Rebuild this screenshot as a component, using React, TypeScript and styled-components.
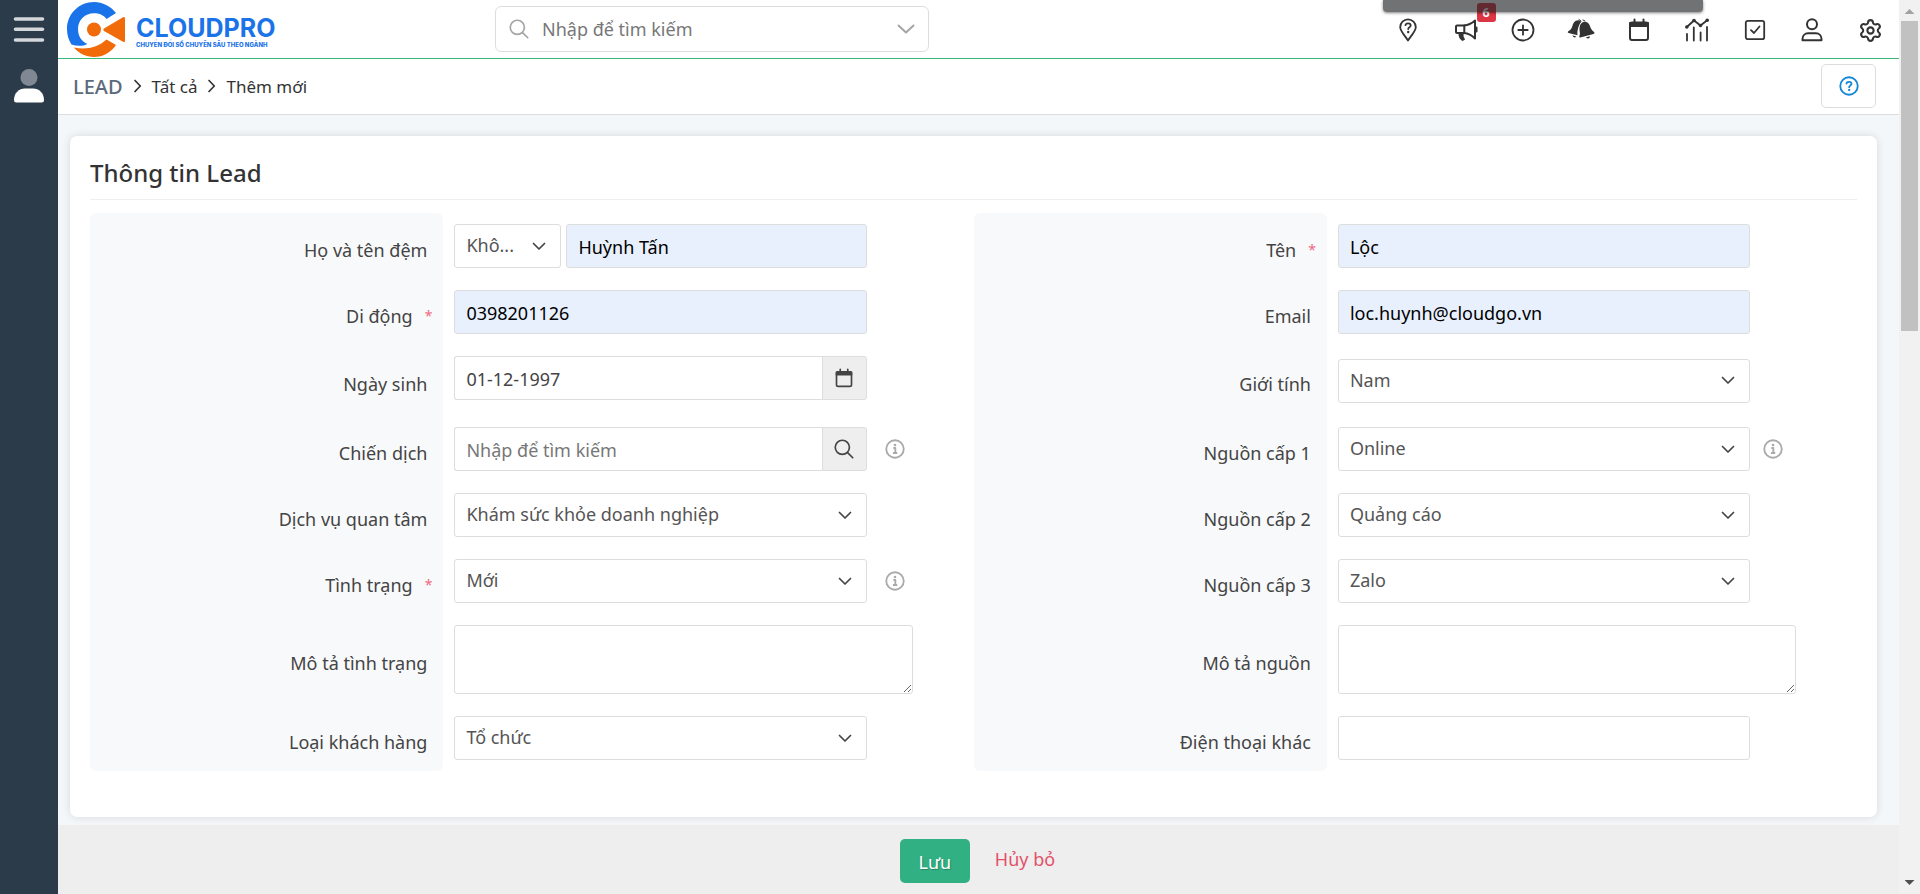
import React from "react";
import styled, { createGlobalStyle } from "styled-components";
import { Settings } from "lucide-react";

const GlobalStyle = createGlobalStyle`
  *, *::before, *::after { box-sizing: border-box; }
  body { margin: 0; background: #f3f7fa; }
  body, input, select, textarea, button {
    font-family: "Noto Sans", "Open Sans", sans-serif;
    font-size: 18px;
    font-weight: 400;
    color: #444;
  }
`;

const Shell = styled.div`
  display: flex;
  min-height: 100vh;
`;

const Sidebar = styled.nav`
  flex: 0 0 58px;
  display: flex;
  flex-direction: column;
  align-items: center;
  gap: 26px;
  padding-top: 16px;
  background: #2c3b49;
`;

const PlainButton = styled.button`
  display: flex;
  align-items: center;
  justify-content: center;
  padding: 0;
  border: 0;
  background: none;
  cursor: pointer;
`;

const Main = styled.div`
  flex: 1;
  min-width: 0;
  display: flex;
  flex-direction: column;
`;

const Header = styled.header`
  display: flex;
  align-items: center;
  justify-content: space-between;
  height: 59px;
  background: #fff;
  border-bottom: 1px solid #3cb878;
`;

const Brand = styled.a`
  flex: 0 0 437px;
  display: flex;
  align-items: center;
  gap: 11px;
  padding-left: 9px;
  text-decoration: none;
  color: #1a73e8;
  font-family: Inter, sans-serif;
`;

const BrandText = styled.span`
  display: flex;
  flex-direction: column;
  gap: 1px;
  padding-top: 6px;
`;

const BrandName = styled.span`
  font-size: 25px;
  font-weight: 700;
  line-height: 24px;
`;

const Tagline = styled.span`
  font-size: 6px;
  font-weight: 800;
  line-height: 8px;
  white-space: nowrap;
`;

const SearchBox = styled.label`
  flex: 0 1 434px;
  display: flex;
  align-items: center;
  gap: 13px;
  height: 46px;
  margin-right: auto;
  padding: 0 13px;
  border: 1px solid #ddd;
  border-radius: 6px;
`;

const SearchInput = styled.input`
  flex: 1;
  min-width: 0;
  padding: 0;
  border: 0;
  outline: 0;
  background: none;
  &::placeholder { color: #777; opacity: 1; }
`;

const Tools = styled.div`
  flex: 0 0 520px;
  display: flex;
`;

const ToolButton = styled(PlainButton)`
  position: relative;
  flex: 1;
  height: 58px;
  padding-top: 2px;
`;

const Badge = styled.span`
  position: absolute;
  top: 3px;
  right: -1px;
  width: 19px;
  height: 19px;
  border-radius: 3px;
  background: #dc3545;
  color: #fff;
  font: 700 13px/19px Roboto, sans-serif;
  text-align: center;
`;

const ScreenBar = styled.div`
  position: absolute;
  top: 0;
  right: 217px;
  width: 320px;
  height: 12px;
  border-radius: 0 0 4px 4px;
  background: rgba(32, 34, 37, 0.64);
  box-shadow: 0 1px 3px rgba(0, 0, 0, 0.5);
`;

const Crumbs = styled.div`
  display: flex;
  align-items: center;
  gap: 10px;
  height: 56px;
  padding: 0 23px 1px 15px;
  background: #fff;
  border-bottom: 1px solid #ddd;
`;

const Crumb = styled.a<{ $lead?: boolean }>`
  color: ${(p) => (p.$lead ? "#5b6b7b" : "#333")};
  font-size: ${(p) => (p.$lead ? "20px" : "17px")};
  font-weight: ${(p) => (p.$lead ? 500 : 400)};
  text-decoration: none;
`;

const HelpButton = styled(PlainButton)`
  width: 55px;
  height: 44px;
  margin-left: auto;
  border: 1px solid #ddd;
  border-radius: 5px;
  color: #1488d6;
`;

const Content = styled.main`
  flex: 1;
  padding: 21px 22px 8px 12px;
`;

const Card = styled.section`
  padding: 21px 20px 46px;
  background: #fff;
  border-radius: 7px;
  box-shadow: 0 0 8px rgba(0, 0, 0, 0.12);
`;

const CardTitle = styled.h2`
  margin: 0 0 13px;
  padding-bottom: 10px;
  border-bottom: 1px solid #eee;
  color: #333;
  font-size: 24px;
  font-weight: 500;
  line-height: 32px;
`;

const ValueCell = styled.div`
  display: flex;
  align-items: center;
  gap: 18px;
  min-height: 66px;
  padding: 11px 61px 11px 11px;
`;

const FieldGrid = styled.div`
  display: grid;
  grid-template-columns: minmax(0, 2fr) minmax(0, 3fr) minmax(0, 2fr) minmax(0, 3fr);
  ${ValueCell}:nth-child(4n) { gap: 13px; }
`;

const LabelCell = styled.div<{ $required?: boolean; $edge?: "top" | "bottom" }>`
  display: flex;
  align-items: center;
  justify-content: flex-end;
  gap: 12px;
  padding: 7px ${(p) => (p.$required ? "11px" : "16px")} 0 12px;
  background: #f8f9fb;
  border-radius: ${(p) =>
    p.$edge === "top" ? "6px 6px 0 0" : p.$edge === "bottom" ? "0 0 6px 6px" : "0"};
`;

const Star = styled.span`
  color: #f0697d;
  font-size: 14px;
`;

const Control = styled.div<{ $lifted?: boolean }>`
  flex: 0 0 90%;
  display: flex;
  gap: 5px;
  margin-bottom: ${(p) => (p.$lifted ? "5px" : "0")};
`;

const TextBox = styled.input<{ $filled?: boolean }>`
  flex: 1;
  min-width: 0;
  height: 44px;
  padding: 2px 11px 0;
  border: 1px solid #ddd;
  border-radius: 3px;
  outline: 0;
  background: ${(p) => (p.$filled ? "#e8f0fe" : "#fff")};
  color: ${(p) => (p.$filled ? "#000" : "#444")};
  &::placeholder { color: #777; opacity: 1; }
`;

const InputGroup = styled.div`
  flex: 1;
  display: flex;
  min-width: 0;
  ${TextBox} { border-right: 0; border-radius: 3px 0 0 3px; }
`;

const Addon = styled(PlainButton)`
  flex: 0 0 45px;
  height: 44px;
  border: 1px solid #ddd;
  border-radius: 0 3px 3px 0;
  background: #eee;
`;

const SelectWrap = styled.div<{ $narrow?: boolean }>`
  position: relative;
  flex: ${(p) => (p.$narrow ? "0 0 107px" : "1")};
  min-width: 0;
  svg {
    position: absolute;
    top: 0;
    bottom: 0;
    right: 15px;
    margin: auto 0;
    pointer-events: none;
  }
`;

const Select = styled.select`
  appearance: none;
  display: block;
  width: 100%;
  height: 44px;
  padding: 0 40px 2px 11px;
  border: 1px solid #ddd;
  border-radius: 3px;
  outline: 0;
  background: #fff;
  color: #555;
`;

const TextArea = styled.textarea`
  flex: 1;
  min-width: 0;
  height: 69px;
  border: 1px solid #ddd;
  border-radius: 3px;
  outline: 0;
  resize: both;
`;

const Footer = styled.footer`
  display: flex;
  align-items: flex-start;
  justify-content: center;
  gap: 25px;
  height: 69px;
  padding: 14px 2px 0 0;
  background: #eee;
`;

const SaveButton = styled.button`
  width: 70px;
  height: 44px;
  padding: 2px 0 0;
  border: 0;
  border-radius: 5px;
  background: #31b083;
  color: #fff;
  text-shadow: 1px 1px 1px rgba(0, 0, 0, 0.25);
`;

const CancelLink = styled.a`
  color: #e4506a;
  line-height: 40px;
  text-decoration: none;
`;

const ScrollTrack = styled.div`
  flex: 0 0 21px;
  display: flex;
  flex-direction: column;
  align-items: center;
  background: #f1f1f1;
`;

const ScrollArrow = styled.span<{ $down?: boolean }>`
  width: 10px;
  height: 5px;
  margin: ${(p) => (p.$down ? "auto 0 9px" : "9px 0 7px")};
  background: ${(p) => (p.$down ? "#505050" : "#a3a3a3")};
  clip-path: ${(p) =>
    p.$down ? "polygon(0 0, 100% 0, 50% 100%)" : "polygon(50% 0, 100% 100%, 0 100%)"};
`;

const ScrollThumb = styled.span`
  width: 17px;
  height: 310px;
  background: #c1c1c1;
`;

const Icon = ({
  children,
  size = 24,
  color = "#333",
  stroke = 2,
}: {
  children: React.ReactNode;
  size?: number;
  color?: string;
  stroke?: number;
}) => (
  <svg
    width={size}
    height={size}
    viewBox="0 0 24 24"
    fill="none"
    stroke={color}
    strokeWidth={stroke}
    strokeLinecap="round"
    strokeLinejoin="round"
    aria-hidden="true"
  >
    {children}
  </svg>
);

const SearchIcon = ({ color }: { color: string }) => (
  <Icon size={20} color={color}>
    <circle cx="10" cy="10" r="8.5" />
    <path d="M16.3 16.3L22.5 22.5" />
  </Icon>
);

const ChevronDown = ({ wide }: { wide?: boolean }) => (
  <svg
    width={wide ? 18 : 14}
    height={wide ? 10 : 9}
    viewBox={wide ? "0 0 18 10" : "0 0 14 9"}
    fill="none"
    aria-hidden="true"
  >
    <path
      d={wide ? "M1.5 1.5L9 8.5L16.5 1.5" : "M1.5 1.5L7 7L12.5 1.5"}
      stroke={wide ? "#a5a5a5" : "#444"}
      strokeWidth={wide ? 2 : 1.7}
      strokeLinecap="round"
      strokeLinejoin="round"
    />
  </svg>
);

const ChevronRight = () => (
  <svg width="9" height="14" viewBox="0 0 9 14" fill="none" aria-hidden="true">
    <path d="M2 1.5L7.3 7L2 12.5" stroke="#333" strokeWidth="1.7" strokeLinecap="round" strokeLinejoin="round" />
  </svg>
);

const CalendarIcon = ({ size, color }: { size?: number; color?: string }) => (
  <Icon size={size} color={color}>
    <rect x="3" y="4.5" width="18" height="17.5" rx="2" />
    <path d="M3 5h18v3H3z" fill={color ?? "#333"} />
    <path d="M7.5 1.5v3M16.5 1.5v3" />
  </Icon>
);

const InfoIcon = () => (
  <Icon size={20} color="#aaa" stroke={2.2}>
    <circle cx="12" cy="12" r="10.5" />
    <path d="M10 10.8H12.4V16.3M9.5 16.8H14.7" strokeLinecap="butt" />
    <circle cx="12" cy="7.2" r="1.6" fill="#aaa" stroke="none" />
  </Icon>
);

const HelpIcon = () => (
  <Icon size={20} color="currentColor" stroke={2.2}>
    <circle cx="12" cy="12" r="10.5" />
    <path d="M9 9C9.2 7.6 10.3 7 12 7C13.8 7 15 8 15 9.4C15 11.4 12.2 11.4 12.2 13.4" />
    <circle cx="12.2" cy="16.8" r="1.4" fill="currentColor" stroke="none" />
  </Icon>
);

const Logo = () => (
  <svg width="58" height="56" viewBox="0 0 58 56" aria-hidden="true">
    <path
      fill="#1a73e8"
      d="M49 12C43.5 5 35.5 1 27 1C12 1 0 13 0 28C0 34 1.5 39 4.5 43.5C10 45.5 16 45.3 20.5 43C14.5 40.5 11 35 11 28C11 19 18 12.3 27 12.3C32 12.3 36.5 14 39.5 18Z"
    />
    <path
      fill="#f26b0a"
      d="M7 46.5C19 49 31 46.5 39.5 38.5L49 44C44 51.5 36 56 27 56C19 56 12 52.5 7 46.5Z"
    />
    <circle cx="27" cy="28.5" r="7" fill="#f26b0a" />
    <path fill="#f26b0a" d="M37 27.5L56 16.2Q58 15.3 58 17.5V39.5Q58 42 56 40.8L37 30Q35.3 28.8 37 27.5Z" />
  </svg>
);

const tools: { name: string; icon: React.ReactNode; badge?: string }[] = [
  {
    name: "Trợ giúp",
    icon: (
      <Icon stroke={1.8}>
        <path d="M12 22.5C9.5 18.5 4.2 13 4.2 9.2A7.8 7.8 0 0 1 19.8 9.2C19.8 13 14.5 18.5 12 22.5Z" />
        <path d="M9.4 7.2C9.8 5.8 11 5.4 12.1 5.4C13.6 5.4 14.7 6.3 14.7 7.5C14.7 9.3 12.2 9.3 12.2 11.1" />
        <circle cx="12.2" cy="14" r="1.2" fill="#333" stroke="none" />
      </Icon>
    ),
  },
  {
    name: "Thông báo",
    badge: "6",
    icon: (
      <Icon>
        <path d="M2 8.5Q2 7.5 3 7.5H10Q16 7 21 2.5V20.5Q16 15.5 10 15H3Q2 15 2 14Z" />
        <path d="M10.3 7.5V15M22.5 9.5V13.5" />
        <path d="M5 15.5H9Q8.5 18.5 10.5 21.5Q8 23.5 6.5 21Q4.5 18 5 15.5Z" fill="#333" strokeWidth="1" />
      </Icon>
    ),
  },
  {
    name: "Tạo nhanh",
    icon: (
      <Icon stroke={1.8}>
        <circle cx="12" cy="12" r="10.5" />
        <path d="M12 7.3v9.4M7.3 12h9.4" />
      </Icon>
    ),
  },
  {
    name: "Nhắc nhở",
    icon: (
      <svg width="28" height="24" viewBox="0 0 28 24" fill="#333" aria-hidden="true">
        <path d="M11.5 2.2C8 2 6.2 5 5.3 8.3C4.6 11 3 12.5 1 13.5Q.2 14.8 1.6 15L10.5 17.3C10 13.5 11.4 6.8 14.3 3.7C13.5 2.9 12.7 2.4 11.5 2.2Z" />
        <path d="M15.2 4.6C17 2.9 21 3.6 22.5 7C23.7 9.7 24 12.2 27.3 14.2Q28 15.3 26.5 15.9L13.3 19.5Q11.7 19.5 12.3 18.3C13.8 15.5 12 12.8 12.6 9.5C12.9 7.4 13.6 5.8 15.2 4.6Z" />
        <path d="M5.2 17.2L9.3 18.4Q7.5 21.2 5.2 17.2ZM18.7 19.5L23 18.2Q22.5 22.2 18.7 19.5Z" />
        <path d="M12 1.5l2 1.5M16 2l2 1" stroke="#333" strokeLinecap="round" />
      </svg>
    ),
  },
  { name: "Lịch", icon: <CalendarIcon /> },
  {
    name: "Báo cáo",
    icon: (
      <Icon stroke={1.8}>
        <path d="M1.8 9L9 2.5L15.5 7.5L22.5 2" />
        <circle cx="1.8" cy="9" r="1.8" fill="#333" stroke="none" />
        <circle cx="9" cy="2.5" r="1.8" fill="#333" stroke="none" />
        <circle cx="15.5" cy="7.5" r="1.8" fill="#333" stroke="none" />
        <circle cx="22.2" cy="2.2" r="1.8" fill="#333" stroke="none" />
        <path d="M2 16v6.5M8.8 9.5v13M15.6 14.5v8M22 9v13.5" />
      </Icon>
    ),
  },
  {
    name: "Công việc",
    icon: (
      <Icon stroke={1.8}>
        <rect x="2.8" y="2.8" width="18.4" height="18.4" rx="2" />
        <path d="M8 12.2L11 15L16.5 8.5" />
      </Icon>
    ),
  },
  {
    name: "Tài khoản",
    icon: (
      <Icon>
        <circle cx="12" cy="6.3" r="5" />
        <path d="M2.5 22.3V21C2.5 17.5 5 15.3 8 15.3H16C19 15.3 21.5 17.5 21.5 21V22.3Z" />
      </Icon>
    ),
  },
  { name: "Cài đặt", icon: <Settings size={25} color="#333" strokeWidth={2} /> },
];

type Field = {
  id: string;
  label: string;
  kind: "text" | "select" | "area" | "date" | "lookup" | "name";
  value?: string;
  filled?: boolean;
  required?: boolean;
  info?: boolean;
};

const fields: Field[] = [
  { id: "middle-name", label: "Họ và tên đệm", kind: "name", value: "Huỳnh Tấn" },
  { id: "first-name", label: "Tên", kind: "text", value: "Lộc", filled: true, required: true },
  { id: "mobile", label: "Di động", kind: "text", value: "0398201126", filled: true, required: true },
  { id: "email", label: "Email", kind: "text", value: "loc.huynh@cloudgo.vn", filled: true },
  { id: "birthday", label: "Ngày sinh", kind: "date", value: "01-12-1997" },
  { id: "gender", label: "Giới tính", kind: "select", value: "Nam" },
  { id: "campaign", label: "Chiến dịch", kind: "lookup", info: true },
  { id: "source-1", label: "Nguồn cấp 1", kind: "select", value: "Online", info: true },
  { id: "service", label: "Dịch vụ quan tâm", kind: "select", value: "Khám sức khỏe doanh nghiệp" },
  { id: "source-2", label: "Nguồn cấp 2", kind: "select", value: "Quảng cáo" },
  { id: "status", label: "Tình trạng", kind: "select", value: "Mới", required: true, info: true },
  { id: "source-3", label: "Nguồn cấp 3", kind: "select", value: "Zalo" },
  { id: "status-note", label: "Mô tả tình trạng", kind: "area" },
  { id: "source-note", label: "Mô tả nguồn", kind: "area" },
  { id: "customer-type", label: "Loại khách hàng", kind: "select", value: "Tổ chức" },
  { id: "other-phone", label: "Điện thoại khác", kind: "text" },
];

const SelectBox = ({ id, value, narrow, name }: { id?: string; value?: string; narrow?: boolean; name?: string }) => (
  <SelectWrap $narrow={narrow}>
    <Select id={id} aria-label={name}>
      <option>{value}</option>
    </Select>
    <ChevronDown />
  </SelectWrap>
);

const FieldControl = ({ field }: { field: Field }) => {
  const { id, kind, value, filled } = field;
  switch (kind) {
    case "area":
      return <TextArea id={id} />;
    case "select":
      return (
        <Control>
          <SelectBox id={id} value={value} />
        </Control>
      );
    case "name":
      return (
        <Control>
          <SelectBox value="Khô..." narrow name="Danh xưng" />
          <TextBox id={id} defaultValue={value} $filled />
        </Control>
      );
    case "date":
      return (
        <Control $lifted>
          <InputGroup>
            <TextBox id={id} defaultValue={value} />
            <Addon type="button" aria-label="Chọn ngày">
              <CalendarIcon size={20} color="#444" />
            </Addon>
          </InputGroup>
        </Control>
      );
    case "lookup":
      return (
        <Control>
          <InputGroup>
            <TextBox id={id} placeholder="Nhập để tìm kiếm" />
            <Addon type="button" aria-label="Tìm">
              <SearchIcon color="#444" />
            </Addon>
          </InputGroup>
        </Control>
      );
    default:
      return (
        <Control>
          <TextBox id={id} defaultValue={value} $filled={filled} />
        </Control>
      );
  }
};

export default function App() {
  return (
    <>
      <GlobalStyle />
      <Shell>
        <Sidebar>
          <PlainButton type="button" aria-label="Menu">
            <svg width="32" height="27" viewBox="0 0 32 27" aria-hidden="true">
              <path
                d="M2.5 3H29.5M2.5 13.3H29.5M2.5 24H29.5"
                stroke="#d5d8db"
                strokeWidth="3.6"
                strokeLinecap="round"
              />
            </svg>
          </PlainButton>
          <PlainButton type="button" aria-label="Người dùng">
            <svg width="32" height="36" viewBox="0 0 32 36" aria-hidden="true">
              <circle cx="16" cy="8.5" r="8.5" fill="#808993" />
              <path
                d="M1 31C1 24 6 19.5 12 19.5H20C26 19.5 31 24 31 31Q31 33.5 28.5 33.5H3.5Q1 33.5 1 31Z"
                fill="#fff"
              />
            </svg>
          </PlainButton>
        </Sidebar>
        <Main>
          <Header>
            <Brand href="#">
              <Logo />
              <BrandText>
                <BrandName>CLOUDPRO</BrandName>
                <Tagline>CHUYỂN ĐỔI SỐ CHUYÊN SÂU THEO NGÀNH</Tagline>
              </BrandText>
            </Brand>
            <SearchBox>
              <SearchIcon color="#a5a5a5" />
              <SearchInput type="search" placeholder="Nhập để tìm kiếm" />
              <ChevronDown wide />
            </SearchBox>
            <Tools>
              {tools.map((tool) => (
                <ToolButton key={tool.name} type="button" aria-label={tool.name}>
                  {tool.icon}
                  {tool.badge && <Badge>{tool.badge}</Badge>}
                </ToolButton>
              ))}
            </Tools>
          </Header>
          <Crumbs>
            <Crumb href="#" $lead>LEAD</Crumb>
            <ChevronRight />
            <Crumb href="#">Tất cả</Crumb>
            <ChevronRight />
            <Crumb href="#">Thêm mới</Crumb>
            <HelpButton type="button" aria-label="Hướng dẫn">
              <HelpIcon />
            </HelpButton>
          </Crumbs>
          <Content>
            <Card>
              <CardTitle>Thông tin Lead</CardTitle>
              <FieldGrid>
                {fields.map((field, i) => (
                  <React.Fragment key={field.id}>
                    <LabelCell
                      $required={field.required}
                      $edge={i < 2 ? "top" : i >= fields.length - 2 ? "bottom" : undefined}
                    >
                      <label htmlFor={field.id}>{field.label}</label>
                      {field.required && <Star>*</Star>}
                    </LabelCell>
                    <ValueCell>
                      <FieldControl field={field} />
                      {field.info && <InfoIcon />}
                    </ValueCell>
                  </React.Fragment>
                ))}
              </FieldGrid>
            </Card>
          </Content>
          <Footer>
            <SaveButton type="submit">Lưu</SaveButton>
            <CancelLink href="#">Hủy bỏ</CancelLink>
          </Footer>
        </Main>
        <ScrollTrack aria-hidden="true">
          <ScrollArrow />
          <ScrollThumb />
          <ScrollArrow $down />
        </ScrollTrack>
        <ScreenBar />
      </Shell>
    </>
  );
}
